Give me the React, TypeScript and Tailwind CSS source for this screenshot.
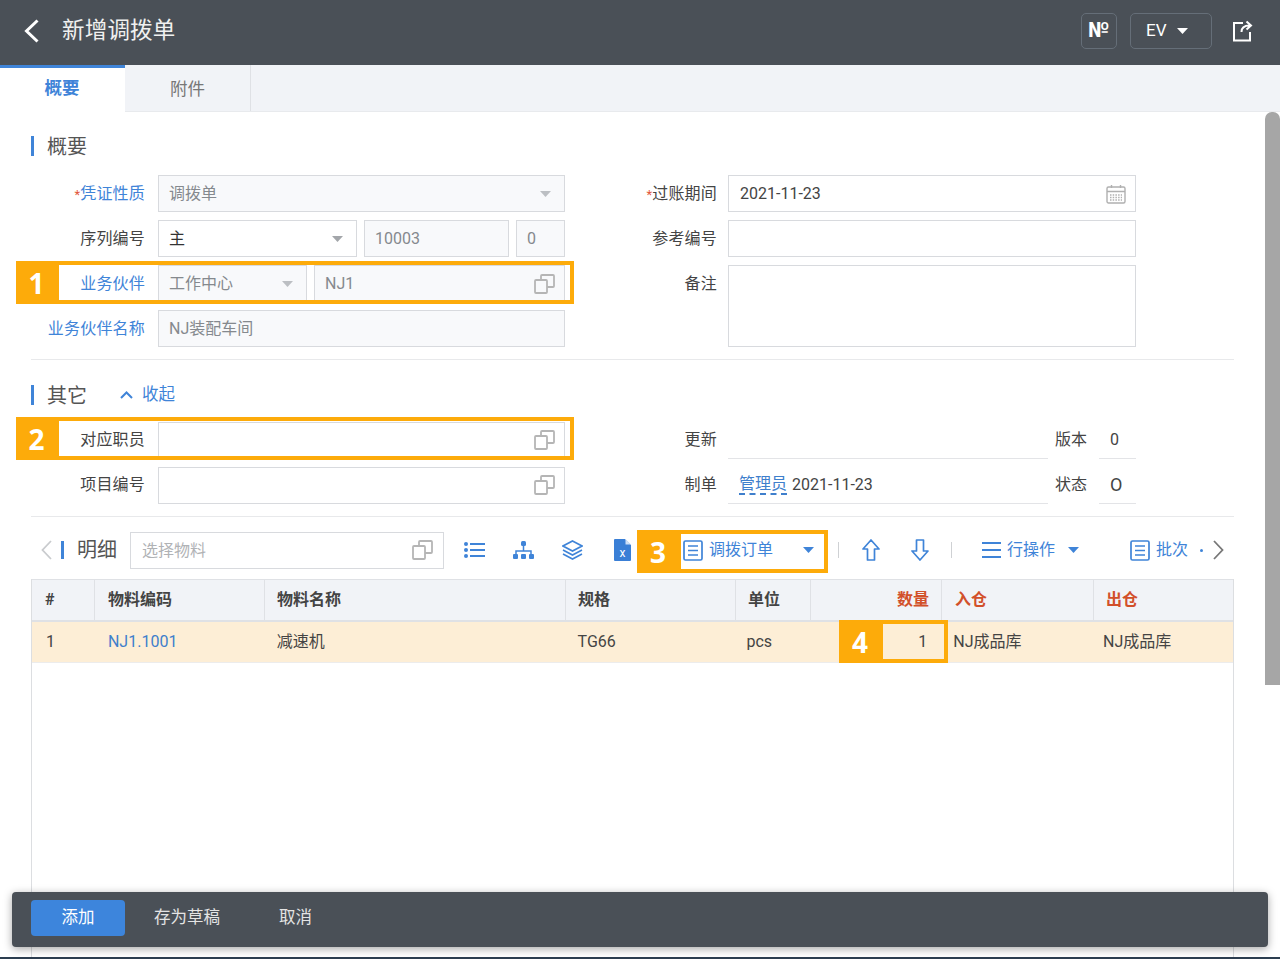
import { ReactNode } from 'react';

const inputBase = 'h-[37px] border border-[#d8dade] flex items-center px-[10px] text-[16px]';
const disabled = `${inputBase} bg-[#f8f9fb] text-[#85898e]`;
const blue = '#3f84d8';

const CopyIcon = () => (
  <svg width="21" height="20" viewBox="0 0 21 20" fill="none" stroke="#b5b5b5" strokeWidth="1.8" className="ml-auto -mr-[1px] shrink-0">
    <rect x="1" y="6" width="12" height="13" rx="1" />
    <path d="M7 6V2a1 1 0 0 1 1-1h11a1 1 0 0 1 1 1v10a1 1 0 0 1-1 1h-6" />
  </svg>
);

const Caret = ({ color = '#a3a6aa' }: { color?: string }) => (
  <svg width="11" height="6" viewBox="0 0 11 6" className="shrink-0">
    <path d="M0 0h11L5.500 6z" fill={color} />
  </svg>
);

const DocIcon = () => (
  <svg width="20" height="21" viewBox="0 0 20 21" fill="none" stroke={blue} strokeWidth="1.7" className="shrink-0">
    <rect x="1" y="1" width="18" height="19" rx="1.500" />
    <path d="M5 6h10M5 10.500h10M5 15h10" />
  </svg>
);

const Label = ({ children, color = 'text-[#444]', className = 'w-[115px] pr-[1px]' }: { children: ReactNode; color?: string; className?: string }) => (
  <div className={`${className} shrink-0 text-right text-[16px] tracking-[0.2px] ${color}`}>{children}</div>
);

const Row = ({ label, children }: { label: ReactNode; children: ReactNode }) => (
  <div className="flex items-center h-[37px] gap-[12px]">
    {label}
    <div className="flex-1 flex gap-[7px] min-w-0">{children}</div>
  </div>
);

const RightRow = ({ label, children }: { label: ReactNode; children: ReactNode }) => (
  <div className="flex gap-[11px] items-center">
    <Label className="w-[100px]">{label}</Label>
    <div className="flex-1">{children}</div>
  </div>
);

const Heading = ({ children }: { children: ReactNode }) => (
  <div className="flex items-center h-[20px] gap-[13px]">
    <div className="w-[3px] h-[20px] bg-[#3f84d8]" />
    <span className="text-[20px] leading-none text-[#555] pt-[2px]">{children}</span>
  </div>
);

const Annot = ({ n, box, fill }: { n: number; box: string; fill: string }) => (
  <div className={`absolute border-4 border-[#fdab0a] pointer-events-none ${box}`}>
    <div className={`absolute -left-1 -top-1 -bottom-1 bg-[#fdab0a] flex items-center justify-center pr-[2px] text-white font-bold text-[28px] ${fill}`} style={{ fontFamily: '"Open Sans", sans-serif' }}>
      {n}
    </div>
  </div>
);

const columns = [
  { title: '#', width: 'w-[62px]', pad: 'pl-[13px]' },
  { title: '物料编码', width: 'w-[170px]', pad: 'pl-[13px]' },
  { title: '物料名称', width: 'w-[301px]', pad: 'pl-[12px]' },
  { title: '规格', width: 'w-[170px]', pad: 'pl-[12px]' },
  { title: '单位', width: 'w-[75px]', pad: 'pl-[12px]' },
  { title: '数量', width: 'w-[131px]', pad: 'pr-[12px] justify-end', red: true },
  { title: '入仓', width: 'w-[152px]', pad: 'pl-[13px]', red: true },
  { title: '出仓', width: 'w-[141px]', pad: 'pl-[12px]', red: true },
];

const App = () => {
  return (
    <div
      className="relative w-[1280px] h-[959px] overflow-hidden bg-white flex flex-col"
      style={{ fontFamily: 'Roboto, "Noto Sans CJK SC", sans-serif' }}
    >
      {/* Header */}
      <div className="h-[65px] shrink-0 bg-[#4a5057] flex items-center pl-[24px] pr-[27px] pb-[4px] text-white">
        <svg width="15" height="24" viewBox="0 0 15 24" fill="none" stroke="white" strokeWidth="3">
          <path d="M13.500 1.500 2.500 12l11 10.500" />
        </svg>
        <span className="ml-[23px] text-[22.500px] tracking-[0.2px] text-[#f0f0f0]">新增调拨单</span>
        <div className="ml-auto w-[36px] h-[36px] border border-[#656e78] rounded-[5px] flex items-center justify-center font-bold text-[21px]">№</div>
        <div className="ml-[13px] w-[82px] h-[36px] border border-[#656e78] rounded-[5px] flex items-center pl-[15px] gap-[10px] text-[17px]">
          EV
          <Caret color="white" />
        </div>
        <svg width="21" height="22" viewBox="0 0 21 22" fill="none" stroke="white" strokeWidth="2" className="ml-[20px]">
          <path d="M11 3H2v17.500h16V12" />
          <path d="M9.500 12c0-4.500 3-6.500 8-6.500M14.500 1.500l4.500 4-4.500 4" />
        </svg>
      </div>

      {/* Tabs */}
      <div className="h-[47px] shrink-0 bg-[#f1f3f7] border-b border-[#e8eaed] flex text-[17.500px]">
        <div className="w-[125px] h-[47px] bg-white border-t-[3px] border-[#3f84d8] flex items-center justify-center pr-[1px] pb-[3px] font-bold text-[#3f84d8]">概要</div>
        <div className="w-[126px] border-r border-[#dfe1e5] flex items-center justify-center pt-[2px] text-[#777]">附件</div>
      </div>

      {/* Body */}
      <div className="flex-1 flex min-h-0">
        <div className="w-[1234px] pl-[31px] pt-[24px] flex flex-col min-h-0">
          <Heading>概要</Heading>
          <div className="flex gap-[52px] mt-[19px]">
            <div className="w-[534px] flex flex-col gap-[8px]">
              <Row label={<Label color="text-[#3f84d8]"><span className="text-[#e2573a] text-[13px]">*</span>凭证性质</Label>}>
                <div className={`${disabled} flex-1`}>
                  调拨单
                  <span className="ml-auto mr-[3px]"><Caret color="#bcbfc3" /></span>
                </div>
              </Row>
              <Row label={<Label>序列编号</Label>}>
                <div className={`${inputBase} w-[199px] text-[#333]`}>
                  主
                  <span className="ml-auto mr-[3px]"><Caret /></span>
                </div>
                <div className={`${disabled} w-[145px]`}>10003</div>
                <div className={`${disabled} flex-1`}>0</div>
              </Row>
              <Row label={<Label color="text-[#3f84d8]">业务伙伴</Label>}>
                <div className={`${disabled} w-[149px]`}>
                  工作中心
                  <span className="ml-auto mr-[3px]"><Caret color="#bcbfc3" /></span>
                </div>
                <div className={`${disabled} flex-1`}>
                  NJ1
                  <CopyIcon />
                </div>
              </Row>
              <Row label={<Label color="text-[#3f84d8]">业务伙伴名称</Label>}>
                <div className={`${disabled} flex-1`}>NJ装配车间</div>
              </Row>
            </div>
            <div className="w-[519px] flex flex-col gap-[8px]">
              <RightRow label={<><span className="text-[#e2573a] text-[13px]">*</span>过账期间</>}>
                <div className={`${inputBase} text-[#444] pl-[11px]`}>
                  2021-11-23
                  <svg width="20" height="20" viewBox="0 0 20 20" fill="none" stroke="#b0b0b0" strokeWidth="1.400" className="ml-auto -mr-[1px]">
                    <rect x="1" y="3" width="18" height="16" rx="1.500" />
                    <path d="M1 7.500h18M5.500 1v3M14.500 1v3" />
                    <path d="M4 11h12M4 13.500h12M4 16h12" strokeDasharray="1.500 1.200" />
                  </svg>
                </div>
              </RightRow>
              <RightRow label="参考编号">
                <div className={inputBase} />
              </RightRow>
              <div className="flex gap-[11px] items-start">
                <div className="h-[37px] flex items-center">
                  <Label className="w-[100px]">备注</Label>
                </div>
                <div className="flex-1 h-[82px] border border-[#d8dade]" />
              </div>
            </div>
          </div>
          <div className="h-px bg-[#e8e9eb] mt-[12px] shrink-0" />

          <div className="mt-[23px] flex items-center">
            <Heading>其它</Heading>
            <svg width="13" height="8" viewBox="0 0 13 8" fill="none" stroke="#3f84d8" strokeWidth="2" className="ml-[33px]">
              <path d="M1 7l5.500-5.500L12 7" />
            </svg>
            <span className="ml-[9px] text-[16.500px] text-[#3f84d8]">收起</span>
          </div>

          <div className="flex gap-[52px] mt-[14px]">
            <div className="w-[534px] flex flex-col gap-[8px]">
              <Row label={<Label>对应职员</Label>}>
                <div className={`${inputBase} flex-1`}><CopyIcon /></div>
              </Row>
              <Row label={<Label>项目编号</Label>}>
                <div className={`${inputBase} flex-1`}><CopyIcon /></div>
              </Row>
            </div>
            <div className="w-[519px] flex flex-col gap-[8px]">
              <RightRow label="更新">
                <div className="flex items-center text-[16px] text-[#444]">
                  <div className="w-[320px] h-[37px] border-b border-[#e3e4e7]" />
                  <div className="w-[39px] text-right">版本</div>
                  <div className="ml-[12px] flex-1 h-[37px] border-b border-[#e3e4e7] flex items-center pl-[11px]">0</div>
                </div>
              </RightRow>
              <RightRow label="制单">
                <div className="flex items-center text-[16px] text-[#444]">
                  <div className="w-[320px] h-[37px] border-b border-[#e3e4e7] flex items-center pl-[11px] gap-[5px]">
                    <span className="text-[#3f7fcc] border-b-2 border-dashed border-[#3f7fcc] leading-[19px]">管理员</span>
                    2021-11-23
                  </div>
                  <div className="w-[39px] text-right">状态</div>
                  <div className="ml-[12px] flex-1 h-[37px] border-b border-[#e3e4e7] flex items-center pl-[11px] text-[18px]">O</div>
                </div>
              </RightRow>
            </div>
          </div>
          <div className="h-px bg-[#e8e9eb] mt-[12px] shrink-0" />

          {/* Detail toolbar */}
          <div className="mt-[15px] h-[37px] -ml-[31px] pl-[41px] flex items-center shrink-0 text-[16px] text-[#3f84d8] w-[1240px]">
            <svg width="11" height="20" viewBox="0 0 11 20" fill="none" stroke="#c9cbce" strokeWidth="1.800" className="shrink-0">
              <path d="M10 1 1.500 10l8.500 9" />
            </svg>
            <div className="w-[3px] h-[18px] bg-[#3f84d8] ml-[9px] shrink-0" />
            <span className="ml-[13px] text-[20px] text-[#555] shrink-0">明细</span>
            <div className="ml-[13px] w-[314px] h-[37px] border border-[#d8dade] flex items-center px-[11px] text-[#b0b2b5] shrink-0">
              <span className="pt-[2px]">选择物料</span>
              <CopyIcon />
            </div>
            <svg width="21" height="16" viewBox="0 0 21 16" fill={blue} className="ml-[20px] shrink-0">
              <circle cx="2" cy="2" r="2" /><circle cx="2" cy="8" r="2" /><circle cx="2" cy="14" r="2" />
              <rect x="6" y="1" width="15" height="2" /><rect x="6" y="7" width="15" height="2" /><rect x="6" y="13" width="15" height="2" />
            </svg>
            <svg width="21" height="18" viewBox="0 0 21 18" className="ml-[28px] shrink-0">
              <path d="M10.500 4v6M3 14v-4h15v4" fill="none" stroke={blue} strokeWidth="1.500" />
              <rect x="8" y="0" width="5" height="5" rx="1.500" fill={blue} />
              <rect x="0" y="13" width="5" height="5" rx="1" fill={blue} />
              <rect x="8" y="13" width="5" height="5" rx="1" fill={blue} />
              <rect x="16" y="13" width="5" height="5" rx="1" fill={blue} />
            </svg>
            <svg width="21" height="20" viewBox="0 0 21 20" fill="none" stroke={blue} strokeWidth="1.600" className="ml-[28px] shrink-0">
              <path d="M10.500 1 20 6l-9.500 5L1 6z" />
              <path d="M1 10l9.500 5 9.500-5M1 14l9.500 5 9.500-5" />
            </svg>
            <svg width="17" height="22" viewBox="0 0 17 22" className="ml-[31px] shrink-0">
              <path d="M1 0h10l6 6v15a1 1 0 0 1-1 1H1a1 1 0 0 1-1-1V1a1 1 0 0 1 1-1z" fill="#3a7fd6" />
              <path d="M11.500 0v5.500H17z" fill="#cfe0f5" />
              <text x="8.500" y="18" textAnchor="middle" fontSize="12" fill="white" fontFamily="Roboto, sans-serif">x</text>
            </svg>
            <div className="ml-[52px] w-[133px] flex items-center shrink-0">
              <DocIcon />
              <span className="ml-[6px]">调拨订单</span>
              <span className="ml-auto mr-[2px]"><Caret color={blue} /></span>
            </div>
            <div className="ml-[22px] w-px h-[16px] bg-[#cfd1d4] shrink-0" />
            <svg width="18" height="22" viewBox="0 0 18 22" fill="none" stroke={blue} strokeWidth="1.700" strokeLinejoin="round" className="ml-[23px] shrink-0">
              <path d="M9 1 1 10h4.500v11h7V10H17z" />
            </svg>
            <svg width="18" height="22" viewBox="0 0 18 22" fill="none" stroke={blue} strokeWidth="1.700" strokeLinejoin="round" className="ml-[31px] shrink-0">
              <path d="M9 21 1 12h4.500V1h7v11H17z" />
            </svg>
            <div className="ml-[22px] w-px h-[16px] bg-[#cfd1d4] shrink-0" />
            <svg width="19" height="16" viewBox="0 0 19 16" fill={blue} className="ml-[30px] shrink-0">
              <rect y="0" width="19" height="2" /><rect y="7" width="19" height="2" /><rect y="14" width="19" height="2" />
            </svg>
            <span className="ml-[6px] shrink-0">行操作</span>
            <span className="ml-[13px] shrink-0"><Caret color={blue} /></span>
            <span className="ml-[51px] shrink-0"><DocIcon /></span>
            <span className="ml-[6px] shrink-0">批次</span>
            <span className="ml-[12px] w-[3px] h-[3px] rounded-full bg-[#3f84d8] shrink-0" />
            <svg width="11" height="20" viewBox="0 0 11 20" fill="none" stroke="#777" strokeWidth="1.800" className="ml-[10px] shrink-0">
              <path d="M1 1l8.500 9L1 19" />
            </svg>
          </div>

          {/* Table */}
          <div className="mt-[10px] flex-1 w-[1203px] border-x border-[#dcdee1] flex flex-col min-h-0">
            <div className="flex h-[43px] bg-[#f1f3f7] border-t border-b-2 border-[#dfe1e5] text-[16px] font-bold text-[#444] shrink-0">
              {columns.map((c, i) => (
                <div
                  key={c.title}
                  className={`${c.width} ${c.pad} ${i > 0 ? 'border-l border-[#dfe1e5]' : ''} ${c.red ? 'text-[#d2502a]' : ''} flex items-center shrink-0`}
                >
                  {c.title}
                </div>
              ))}
            </div>
            <div className="flex h-[41px] bg-[#fdeed6] border-b border-[#ececec] text-[16px] text-[#444] items-center shrink-0">
              <div className="w-[62px] pl-[14px]">1</div>
              <div className="w-[170px] pl-[14px] text-[#3f7fcc]">NJ1.1001</div>
              <div className="w-[301px] pl-[13px]">减速机</div>
              <div className="w-[170px] pl-[13px]">TG66</div>
              <div className="w-[75px] pl-[12px]">pcs</div>
              <div className="w-[131px] pr-[13px] text-right">1</div>
              <div className="w-[152px] pl-[13px]">NJ成品库</div>
              <div className="w-[141px] pl-[11px]">NJ成品库</div>
            </div>
          </div>
        </div>

        {/* Scrollbar */}
        <div className="ml-auto w-[15px] shrink-0">
          <div className="h-[573px] bg-[#a6a6a6] rounded-t-[7px]" />
        </div>
      </div>
      <div className="h-[2px] bg-[#2c3e50] shrink-0" />

      {/* Floating action bar */}
      <div className="absolute left-[12px] top-[892px] w-[1256px] h-[55px] bg-[#4a5057] rounded-[4px] shadow-[0_2px_8px_rgba(0,0,0,0.35)] flex items-start pt-[8px] pl-[19px] text-[16.500px] leading-[36px] text-[#e4e4e4]">
        <div className="w-[94px] h-[36px] rounded-[4px] bg-[#3d85dc] flex items-center justify-center text-white">添加</div>
        <span className="ml-[29px]">存为草稿</span>
        <span className="ml-[59px]">取消</span>
      </div>

      {/* Numbered callouts */}
      <Annot n={1} box="left-[16px] top-[261px] w-[558px] h-[43px]" fill="w-[43px]" />
      <Annot n={2} box="left-[16px] top-[417px] w-[558px] h-[43px]" fill="w-[43px]" />
      <Annot n={3} box="left-[637px] top-[530px] w-[191px] h-[43px]" fill="w-[44px]" />
      <Annot n={4} box="left-[839px] top-[620px] w-[109px] h-[43px]" fill="w-[44px]" />
    </div>
  );
};

export default App;
